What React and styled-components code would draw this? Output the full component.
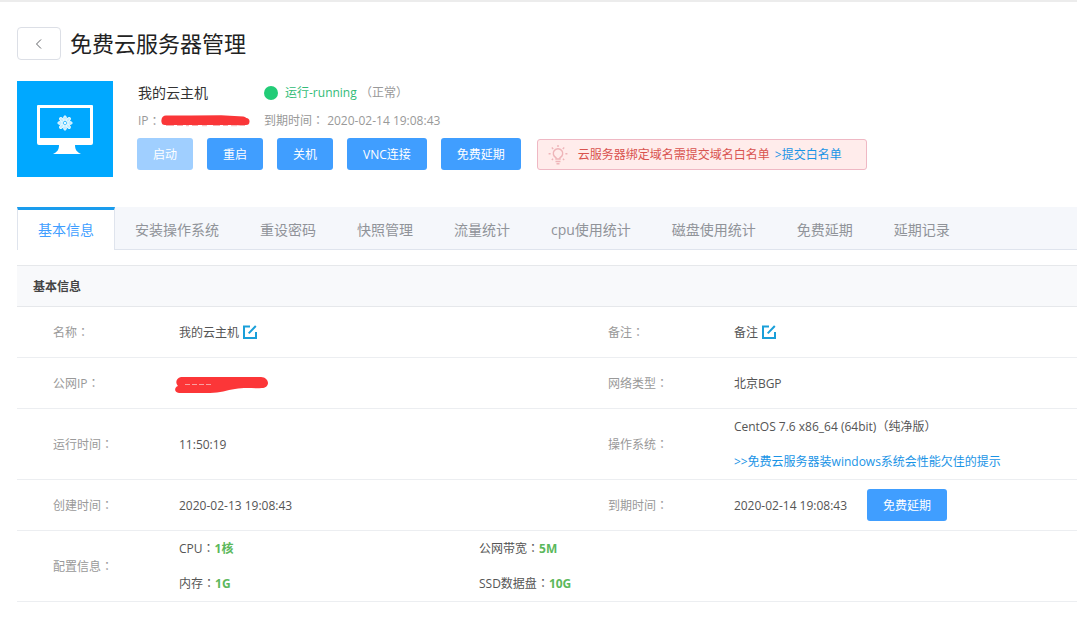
import React from "react";
import styled, { createGlobalStyle, css } from "styled-components";

const GlobalStyle = createGlobalStyle`
  *, *::before, *::after { box-sizing: border-box; }
  body {
    margin: 0;
    background: #fff;
    color: #555;
    font: 12px/20px "Open Sans", "Noto Sans CJK SC", sans-serif;
  }
  a { color: #1a94e6; text-decoration: none; }
`;

const Page = styled.main`
  border-top: 2px solid #ececec;
  padding: 25px 0 30px 17px;
`;

const TitleBar = styled.header`
  display: flex;
  align-items: center;
  gap: 9px;
  height: 33px;
`;

const BackButton = styled.button`
  display: flex;
  align-items: center;
  justify-content: center;
  width: 44px;
  height: 33px;
  padding: 0;
  border: 1px solid #dcdfe6;
  border-radius: 4px;
  background: #fff;
  color: #606266;
`;

const Title = styled.h1`
  margin: 0 0 2px;
  color: #222;
  font-size: 22px;
  line-height: 32px;
  font-weight: 400;
`;

const Summary = styled.section`
  display: flex;
  gap: 24px;
  margin: 21px 0 30px;
`;

const ServerTile = styled.div`
  flex: none;
  width: 96px;
  height: 96px;
  background: #00a8ff;
`;

const SummaryBody = styled.div`
  flex: 1;
  min-width: 0;
`;

const Facts = styled.div`
  display: grid;
  grid-template-columns: 126px 1fr;
  grid-template-rows: 24px 31px;
  align-items: center;
  padding: 0 0 2px 1px;
  color: #999;
`;

const ServerName = styled.span`
  color: #333;
  font-size: 14px;
`;

const Inline = styled.span`
  display: flex;
  align-items: center;
  gap: ${(p) => p.$gap || 0}px;
`;

/* Full-width punctuation centred in its cell */
const Mark = styled.span`
  font-family: "Noto Sans CJK TC", sans-serif;
  line-height: 1;
`;

const StatusDot = styled.i`
  width: 14px;
  height: 14px;
  border-radius: 50%;
  background: #2c7;
`;

const Running = styled.span`
  color: #3b7;
`;

const Actions = styled.div`
  display: flex;
  align-items: center;
  gap: 14px;
`;

const Button = styled.button`
  height: 32px;
  padding: 2px 16px 0;
  border: 0;
  border-radius: 3px;
  background: #409eff;
  color: #fff;
  font: inherit;
  line-height: 30px;
  white-space: nowrap;
  &:disabled { background: #a0cfff; }
`;

const Notice = styled.p`
  display: flex;
  align-items: center;
  height: 31px;
  margin: 0 0 0 2px;
  padding: 2px 24px 0 10px;
  border: 1px solid #efb8c4;
  border-radius: 3px;
  background: #ffeceb;
  color: #d9534f;
  white-space: nowrap;
  svg { margin-right: 10px; }
  a { margin-left: 5px; }
`;

const Tabs = styled.nav`
  display: flex;
  height: 43px;
  border-bottom: 1px solid #dfe4ed;
  background: #f5f7fb;
`;

const Tab = styled.a`
  height: 42px;
  padding: 3px 20px 0;
  border-right: 1px solid transparent;
  color: #909399;
  font-size: 14px;
  line-height: 40px;
  white-space: nowrap;
  ${(p) => p.$active && css`
    height: 43px;
    padding-top: 0;
    border: solid #dfe4ed;
    border-width: 3px 1px 0;
    border-top-color: #1a9ced;
    background: #fff;
    color: #409eff;
  `}
`;

const Panel = styled.section`
  margin-top: 15px;
`;

const PanelTitle = styled.h2`
  height: 42px;
  margin: 0;
  padding-left: 16px;
  border: solid #e6e8eb;
  border-width: 1px 0;
  background: #f8f9fb;
  color: #444;
  font-size: 12px;
  line-height: 42px;
  font-weight: 700;
`;

const Table = styled.table`
  display: block;
  width: 100%;
  tbody { display: block; }
`;

const Row = styled.tr`
  display: grid;
  grid-template-columns: 126px 5fr 126px 4fr;
  align-items: center;
  min-height: ${(p) => (p.$tall ? 71 : 51)}px;
  padding-left: 36px;
  border-bottom: 1px solid #eceef1;
`;

const Label = styled.th`
  padding: 0;
  color: #999;
  font-weight: 400;
  line-height: 35px;
  text-align: left;
`;

const Value = styled.td`
  padding: 0;
  line-height: 35px;
  ${(p) => p.$wide && "grid-column: 2 / -1;"}
`;

const Specs = styled.div`
  display: grid;
  grid-template-columns: 300px 1fr;
  strong { color: #5cb85c; }
`;

const IconButton = styled.button`
  display: flex;
  padding: 0;
  border: 0;
  background: none;
  color: #1a9fd9;
`;

const ServerIcon = () => (
  <svg width="96" height="96" viewBox="0 0 96 96" aria-hidden="true">
    <path fill="#fff" fillRule="evenodd" d="M21 24h54q1 0 1 1v37q0 2-2 2H22q-2 0-2-2V25q0-1 1-1zm2 3v30h50V27z" />
    <path fill="#fff" d="M42 64h16c0 5 2 7 6 9H36c4-2 6-4 6-9z" />
    <g fill="#bfeaff" stroke="#eafaff" strokeWidth="1">
      {[0, 45, 90, 135, 180, 225, 270, 315].map((angle) => (
        <ellipse key={angle} cx="48" cy="37.200" rx="1.4" ry="2.400" transform={`rotate(${angle} 48 42)`} />
      ))}
    </g>
    <circle cx="48" cy="42" r="1.5" fill="#eafaff" />
  </svg>
);

const BulbIcon = () => (
  <svg width="20" height="22" viewBox="0 0 20 22" fill="none" stroke="#eeb4b8" strokeWidth="1.4" aria-hidden="true">
    <path d="M8 15v-1.300a4.700 4.700 0 1 1 4 0V15zM7.500 17.500h5M8.500 19.700h3" />
    <path d="M10 1v2M3.800 3.600l1.400 1.400M16.200 3.600 14.800 5M.6 9.800h2M17.400 9.800h2M3.800 16l1.300-1.300M16.200 16l-1.300-1.300" />
  </svg>
);

const EditIcon = () => (
  <svg width="14" height="14" viewBox="0 0 14 14" fill="none" stroke="currentColor" strokeWidth="2" aria-hidden="true">
    <path d="M7 1.500H1v11.500h12V7M5.700 8.400 12.800 1" />
  </svg>
);

const SmallMask = () => (
  <svg width="90" height="12" viewBox="0 0 90 12" role="img" aria-label="IP">
    <path d="M5 5 30 5l30-.3L82 6" fill="none" stroke="#fa3638" strokeWidth="9" strokeLinecap="round" />
    <path d="M4 6.500h81" fill="none" stroke="#fa3638" strokeWidth="7" strokeLinecap="round" />
    <path d="M5 10.500h8m3 0h6m3 .2h3m3-.2h6m4 .2h5m6-.2h7m3 0h5m3 .2h6m3-.2h5" stroke="#f6b0b0" strokeWidth="1" />
  </svg>
);

const LargeMask = () => (
  <svg width="94" height="18" viewBox="0 0 94 18" role="img" aria-label="公网IP">
    <path fill="#fc3638" d="M6 2h80c4 0 7 3 7 6s-3 5-6 5c-8 1-15-1-27 1-8 1-15 4-25 4H4c-5 0-5-6-1-7C0 8 1 3 6 2z" />
    <path d="M10 9.500h28" stroke="#f9a0a0" strokeWidth="1" strokeDasharray="5 2" />
  </svg>
);

const MaskedValue = styled(Value)`
  svg { display: block; margin: 2px 0 0 -4px; }
`;

const Colon = () => <Mark>：</Mark>;

const tabs = ["基本信息", "安装操作系统", "重设密码", "快照管理", "流量统计", "cpu使用统计", "磁盘使用统计", "免费延期", "延期记录"];

export default function App() {
  return (
    <>
      <GlobalStyle />
      <Page>
        <TitleBar>
          <BackButton aria-label="返回">
            <svg width="8" height="12" viewBox="0 0 8 12" fill="none" stroke="currentColor" aria-hidden="true">
              <path d="M6 1.500 1.500 6 6 10.500" />
            </svg>
          </BackButton>
          <Title>免费云服务器管理</Title>
        </TitleBar>

        <Summary>
          <ServerTile><ServerIcon /></ServerTile>
          <SummaryBody>
            <Facts>
              <ServerName>我的云主机</ServerName>
              <Inline $gap={7}>
                <StatusDot />
                <span><Running>运行-running</Running> <Mark>（</Mark>正常<Mark>）</Mark></span>
              </Inline>
              <Inline>IP<Colon /><SmallMask /></Inline>
              <span>到期时间<Colon /> 2020-02-14 19:08:43</span>
            </Facts>
            <Actions>
              <Button disabled>启动</Button>
              <Button>重启</Button>
              <Button>关机</Button>
              <Button>VNC连接</Button>
              <Button>免费延期</Button>
              <Notice>
                <BulbIcon />
                云服务器绑定域名需提交域名白名单
                <a href="#whitelist">&gt;提交白名单</a>
              </Notice>
            </Actions>
          </SummaryBody>
        </Summary>

        <Tabs>
          {tabs.map((name, i) => (
            <Tab key={name} href={`#tab-${i}`} $active={i === 0}>{name}</Tab>
          ))}
        </Tabs>

        <Panel>
          <PanelTitle>基本信息</PanelTitle>
          <Table>
            <tbody>
              <Row>
                <Label scope="row">名称<Colon /></Label>
                <Value><Inline $gap={4}>我的云主机<IconButton aria-label="修改名称"><EditIcon /></IconButton></Inline></Value>
                <Label scope="row">备注<Colon /></Label>
                <Value><Inline $gap={4}>备注<IconButton aria-label="修改备注"><EditIcon /></IconButton></Inline></Value>
              </Row>
              <Row>
                <Label scope="row">公网IP<Colon /></Label>
                <MaskedValue><LargeMask /></MaskedValue>
                <Label scope="row">网络类型<Colon /></Label>
                <Value>北京BGP</Value>
              </Row>
              <Row $tall>
                <Label scope="row">运行时间<Colon /></Label>
                <Value>11:50:19</Value>
                <Label scope="row">操作系统<Colon /></Label>
                <Value>
                  CentOS 7.6 x86_64 (64bit)<Mark>（</Mark>纯净版<Mark>）</Mark><br />
                  <a href="#notice">&gt;&gt;免费云服务器装windows系统会性能欠佳的提示</a>
                </Value>
              </Row>
              <Row>
                <Label scope="row">创建时间<Colon /></Label>
                <Value>2020-02-13 19:08:43</Value>
                <Label scope="row">到期时间<Colon /></Label>
                <Value><Inline $gap={20}>2020-02-14 19:08:43<Button>免费延期</Button></Inline></Value>
              </Row>
              <Row $tall>
                <Label scope="row">配置信息<Colon /></Label>
                <Value $wide>
                  <Specs>
                    <span>CPU<Colon /><strong>1核</strong></span>
                    <span>公网带宽<Colon /><strong>5M</strong></span>
                    <span>内存<Colon /><strong>1G</strong></span>
                    <span>SSD数据盘<Colon /><strong>10G</strong></span>
                  </Specs>
                </Value>
              </Row>
            </tbody>
          </Table>
        </Panel>
      </Page>
    </>
  );
}
